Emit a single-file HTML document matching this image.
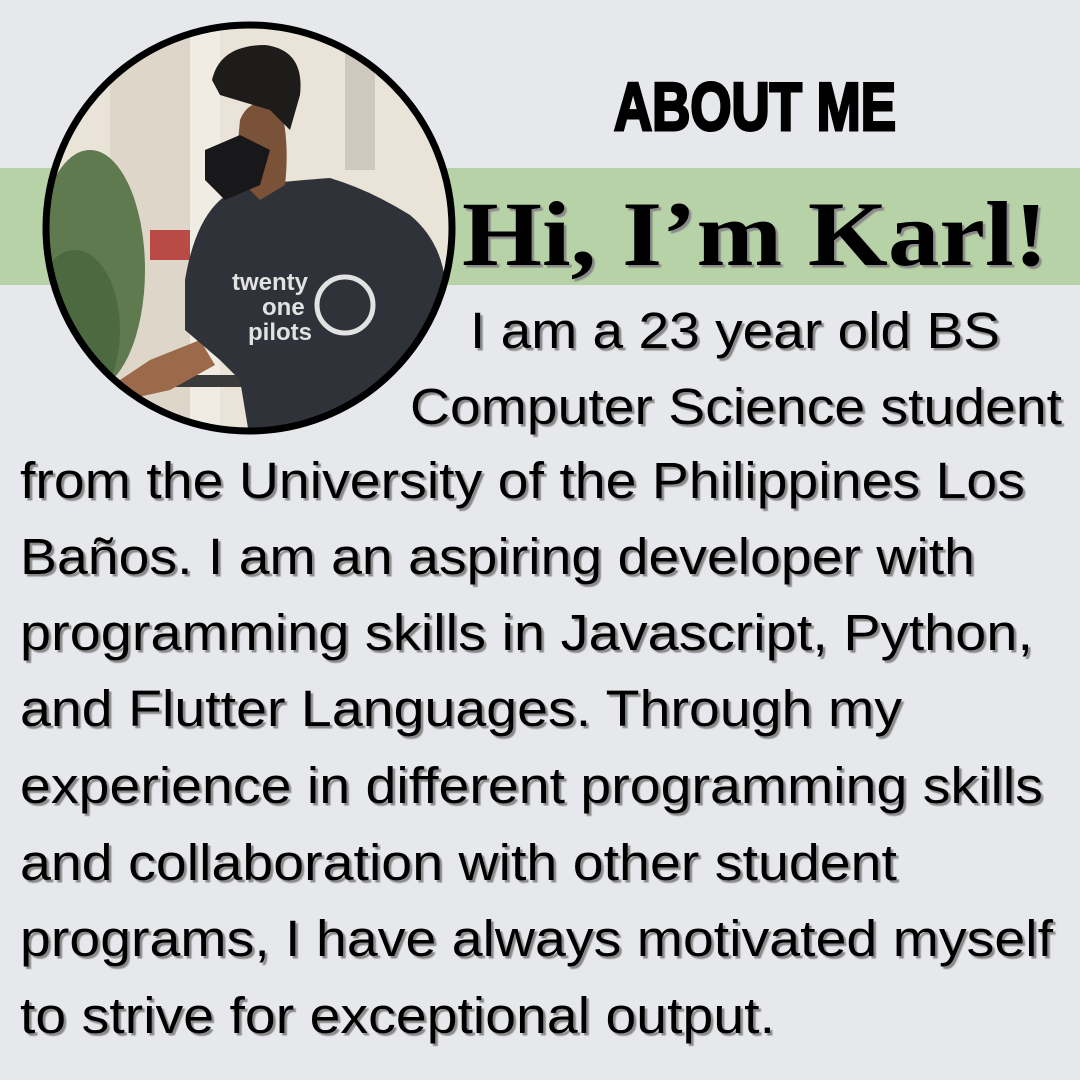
<!DOCTYPE html>
<html><head><meta charset="utf-8"><style>
html,body{margin:0;padding:0}
body{width:1080px;height:1080px;background:#e7e8ec;overflow:hidden;position:relative}
svg{position:absolute;left:0;top:0}
.b{font-family:"Liberation Sans",sans-serif;font-size:51px;fill:#000}
</style></head><body>
<svg width="1080" height="1080" viewBox="0 0 1080 1080">
<defs>
<clipPath id="c"><circle cx="249" cy="228" r="200"/></clipPath>
<filter id="s" x="-5%" y="-20%" width="110%" height="140%"><feDropShadow dx="2.5" dy="2.5" stdDeviation="0.5" flood-color="#8a8a8a" flood-opacity="1"/></filter>
</defs>
<rect x="0" y="168" width="1080" height="117" fill="#b7d2a6"/>
<g clip-path="url(#c)">
<rect x="40" y="20" width="420" height="420" fill="#e9e3d8"/>
<rect x="110" y="20" width="80" height="420" fill="#ddd6c9"/>
<rect x="190" y="20" width="30" height="420" fill="#f1ece3"/>
<rect x="345" y="50" width="30" height="120" fill="#cfc9bd"/>
<rect x="150" y="230" width="40" height="30" fill="#b94a46"/>
<ellipse cx="90" cy="270" rx="55" ry="120" fill="#5f7a4e"/>
<ellipse cx="75" cy="330" rx="45" ry="80" fill="#4c6940"/>
<rect x="150" y="375" width="250" height="12" fill="#3a3a3a"/>
<path d="M120 380 L150 360 L200 340 L215 365 L170 390 L125 400Z" fill="#9b6a4b"/>
<path d="M185 280 Q200 190 255 185 Q300 180 330 178 Q370 190 410 215 Q440 240 445 280 L450 440 L250 440 L240 380 L220 360 L185 330Z" fill="#303239"/>
<path d="M235 175 L240 120 Q250 95 280 105 Q290 140 285 185 L260 200Z" fill="#7a5238"/>
<path d="M212 80 Q220 45 265 45 Q305 50 300 95 L290 130 L270 110 L220 95Z" fill="#1e1c1b"/>
<path d="M205 150 L240 135 L270 150 L260 185 L225 200 L205 180Z" fill="#18181a"/>
<text x="232" y="290" font-family="Liberation Sans" font-weight="bold" font-size="24" fill="#e2e2e2">twenty</text>
<text x="262" y="315" font-family="Liberation Sans" font-weight="bold" font-size="24" fill="#e2e2e2">one</text>
<text x="248" y="340" font-family="Liberation Sans" font-weight="bold" font-size="24" fill="#e2e2e2">pilots</text>
<circle cx="345" cy="305" r="28" fill="none" stroke="#e2e2e2" stroke-width="5"/>
</g>
<circle cx="249" cy="228" r="203" fill="none" stroke="#000" stroke-width="7"/>
<text x="614" y="130" textLength="282" lengthAdjust="spacingAndGlyphs" font-family="Liberation Sans" font-weight="bold" font-size="68" fill="#000" stroke="#000" stroke-width="3">ABOUT ME</text>
<text x="462" y="265" textLength="586" lengthAdjust="spacingAndGlyphs" font-family="Liberation Serif" font-weight="bold" font-size="92" fill="#000" filter="url(#s)">Hi, I’m Karl!</text>
<g class="b" filter="url(#s)">
<text x="470" y="348" textLength="530" lengthAdjust="spacingAndGlyphs">I am a 23 year old BS</text>
<text x="410" y="424" textLength="652" lengthAdjust="spacingAndGlyphs">Computer Science student</text>
<text x="20" y="498" textLength="1005" lengthAdjust="spacingAndGlyphs">from the University of the Philippines Los</text>
<text x="20" y="574" textLength="955" lengthAdjust="spacingAndGlyphs">Baños. I am an aspiring developer with</text>
<text x="20" y="650" textLength="1013" lengthAdjust="spacingAndGlyphs">programming skills in Javascript, Python,</text>
<text x="20" y="726" textLength="882" lengthAdjust="spacingAndGlyphs">and Flutter Languages. Through my</text>
<text x="20" y="803" textLength="1023" lengthAdjust="spacingAndGlyphs">experience in different programming skills</text>
<text x="20" y="880" textLength="877" lengthAdjust="spacingAndGlyphs">and collaboration with other student</text>
<text x="20" y="956" textLength="1033" lengthAdjust="spacingAndGlyphs">programs, I have always motivated myself</text>
<text x="20" y="1033" textLength="755" lengthAdjust="spacingAndGlyphs">to strive for exceptional output.</text>
</g>
</svg>
</body></html>
